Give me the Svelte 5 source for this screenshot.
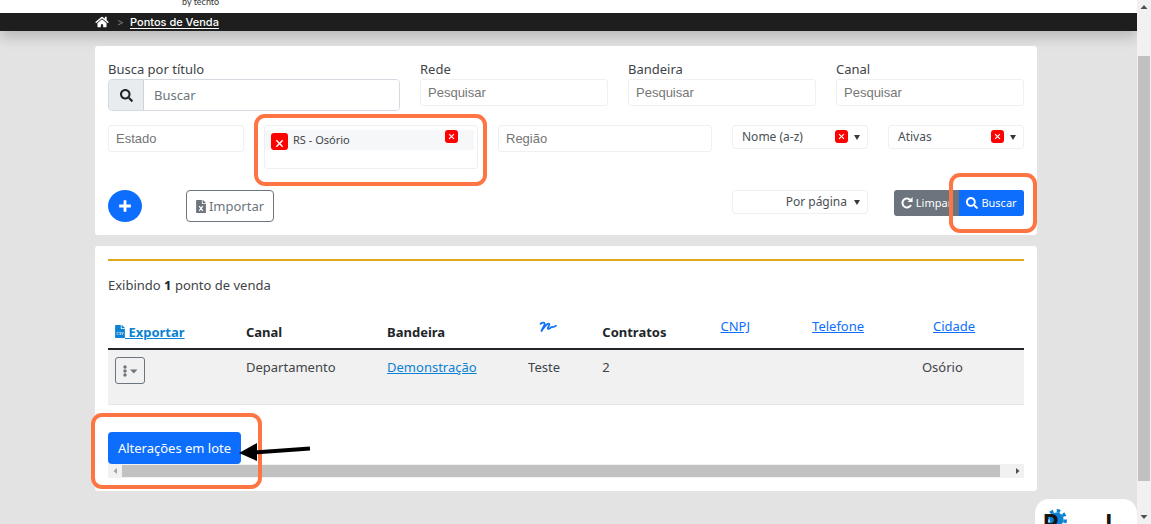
<script lang="ts">
    let search = $state('');
    let order = $state('Nome (a-z)');
    let status = $state('Ativas');
    let perPage = $state('Por página');

    const lookups = ['Rede', 'Bandeira', 'Canal'];
    const rows = [
        { canal: 'Departamento', bandeira: 'Demonstração', nome: 'Teste', contratos: 2, cnpj: '', telefone: '', cidade: 'Osório' }
    ];
</script>

{#snippet searchIcon()}
    <svg class="icon" viewBox="0 0 512 512" aria-hidden="true">
        <path d="M505 442.7L405.3 343c-4.5-4.5-10.6-7-17-7H372c27.6-35.3 44-79.7 44-128C416 93.1 322.9 0 208 0S0 93.1 0 208s93.1 208 208 208c48.3 0 92.7-16.4 128-44v16.3c0 6.4 2.5 12.5 7 17l99.7 99.7c9.4 9.4 24.6 9.4 33.9 0l28.3-28.3c9.4-9.4 9.4-24.6.1-34zM208 336c-70.7 0-128-57.2-128-128 0-70.7 57.2-128 128-128 70.7 0 128 57.2 128 128 0 70.7-57.2 128-128 128z" />
    </svg>
{/snippet}

{#snippet cross()}
    <svg class="cross" viewBox="0 0 8 8" aria-hidden="true">
        <path d="M1.2 1.2l5.6 5.6M6.8 1.2L1.2 6.8" />
    </svg>
{/snippet}

<div class="window">
    <div class="page">
        <header class="brand"><span>by techto</span></header>
        <nav class="breadcrumb">
            <a href="#inicio" aria-label="Início">
                <svg class="home" viewBox="0 0 576 512" aria-hidden="true">
                    <path d="M280.37 148.26L96 300.11V464a16 16 0 0 0 16 16l112.06-.29a16 16 0 0 0 15.92-16V368a16 16 0 0 1 16-16h64a16 16 0 0 1 16 16v95.64a16 16 0 0 0 16 16.05L464 480a16 16 0 0 0 16-16V300L295.67 148.26a12.19 12.19 0 0 0-15.3 0zM571.6 251.47L488 182.56V44.05a12 12 0 0 0-12-12h-56a12 12 0 0 0-12 12v72.61L318.47 43a48 48 0 0 0-61 0L4.34 251.47a12 12 0 0 0-1.6 16.9l25.5 31A12 12 0 0 0 45.15 301l235.22-193.74a12.19 12.19 0 0 1 15.3 0L530.9 301a12 12 0 0 0 16.9-1.6l25.5-31a12 12 0 0 0-1.7-16.93z" />
                </svg>
            </a>
            <span class="separator">&gt;</span>
            <a href="#pontos">Pontos de Venda</a>
        </nav>

        <main>
            <form class="panel filters" onsubmit={(e) => e.preventDefault()}>
                <div class="row lookups">
                    <div class="field">
                        <label for="titulo">Busca por título</label>
                        <div class="input-group">
                            <span class="addon">{@render searchIcon()}</span>
                            <input id="titulo" type="text" placeholder="Buscar" bind:value={search} />
                        </div>
                    </div>
                    {#each lookups as name}
                        <div class="field">
                            <label for={name}>{name}</label>
                            <input id={name} class="box" type="text" placeholder="Pesquisar" />
                        </div>
                    {/each}
                </div>

                <div class="row selects">
                    <input class="box" type="text" placeholder="Estado" aria-label="Estado" />
                    <div class="tokens">
                        <div class="token">
                            <button type="button" class="remove large" aria-label="Remover RS - Osório">{@render cross()}</button>
                            <span>RS - Osório</span>
                            <button type="button" class="remove" aria-label="Limpar cidades">{@render cross()}</button>
                        </div>
                        <input type="text" aria-label="Cidade" />
                        <i class="highlight around-city"></i>
                    </div>
                    <input class="box" type="text" placeholder="Região" aria-label="Região" />
                    <div class="select">
                        <select bind:value={order} aria-label="Ordenar">
                            <option>Nome (a-z)</option>
                            <option>Nome (z-a)</option>
                        </select>
                        <button type="button" class="remove" aria-label="Limpar ordem">{@render cross()}</button>
                    </div>
                    <div class="select">
                        <select bind:value={status} aria-label="Situação">
                            <option>Ativas</option>
                            <option>Inativas</option>
                        </select>
                        <button type="button" class="remove" aria-label="Limpar situação">{@render cross()}</button>
                    </div>
                </div>

                <div class="actions">
                    <button type="button" class="add" aria-label="Adicionar">
                        <svg viewBox="0 0 12 12" aria-hidden="true"><path d="M6 1v10M1 6h10" /></svg>
                    </button>
                    <button type="button" class="import">
                        <svg class="file" viewBox="0 0 384 512" aria-hidden="true">
                            <path d="M224 136V0H24C10.700 0 0 10.700 0 24v464c0 13.300 10.700 24 24 24h336c13.300 0 24-10.700 24-24V160H248c-13.200 0-24-10.800-24-24z" />
                            <path d="M384 121.900v6.100H256V0h6.100c6.400 0 12.500 2.500 17 7l97.900 98c4.500 4.500 7 10.600 7 16.900z" />
                            <path class="mark" d="M120 240l144 192M264 240L120 432" />
                        </svg>
                        Importar
                    </button>
                    <div class="select per-page">
                        <select bind:value={perPage} aria-label="Por página">
                            <option>Por página</option>
                            <option>50</option>
                        </select>
                    </div>
                    <div class="button-group">
                        <button type="reset" class="clear">
                            <svg class="icon" viewBox="0 0 16 16" aria-hidden="true">
                                <path class="arc" d="M13.300 10.700A6 6 0 1 1 12.200 3.700" />
                                <path d="M15.500 0v6.800H8.700z" />
                            </svg>
                            Limpar
                        </button>
                        <button type="submit" class="submit">
                            {@render searchIcon()}
                            Buscar
                            <i class="highlight around-search"></i>
                        </button>
                    </div>
                </div>
            </form>

            <section class="panel results">
                <hr />
                <p>Exibindo <strong>1</strong> ponto de venda</p>
                <table>
                    <colgroup>
                        <col class="w-export" />
                        <col class="w-canal" />
                        <col class="w-canal" />
                        <col class="w-name" />
                        <col class="w-contracts" />
                        <col class="w-cnpj" />
                        <col class="w-phone" />
                        <col />
                    </colgroup>
                    <thead>
                        <tr>
                            <th>
                                <a class="export" href="#exportar">
                                    <svg class="file" viewBox="0 0 384 512" aria-hidden="true">
                                        <path d="M224 136V0H24C10.700 0 0 10.700 0 24v464c0 13.300 10.700 24 24 24h336c13.300 0 24-10.700 24-24V160H248c-13.200 0-24-10.800-24-24z" />
                                        <path d="M384 121.900v6.100H256V0h6.100c6.400 0 12.500 2.500 17 7l97.900 98c4.500 4.500 7 10.600 7 16.900z" />
                                        <path class="csv" d="M135 285H95q-27 0-27 45t27 45h40M225 285h-45v40h45v48h-50M260 280l32 95 32-95" />
                                    </svg> Exportar</a>
                            </th>
                            <th>Canal</th>
                            <th>Bandeira</th>
                            <th>
                                <a class="sort" href="#nome" aria-label="Nome">
                                    <svg class="signature" viewBox="0 0 18 12" aria-hidden="true">
                                        <path d="M1.500 2.800C3 1.300 6 .9 5.600 3.200C5 5.500 3 8 2.200 10.500C4.500 6.500 8.500 2 10.200 2.800C11.500 3.800 7.500 7.500 9.200 8C10.800 8.300 12 5.500 13.200 5.800C13.800 6.200 13.500 7 17 4.800" />
                                    </svg>
                                </a>
                            </th>
                            <th>Contratos</th>
                            <th><a class="sort" href="#cnpj">CNPJ</a></th>
                            <th><a class="sort" href="#telefone">Telefone</a></th>
                            <th><a class="sort" href="#cidade">Cidade</a></th>
                        </tr>
                    </thead>
                    <tbody>
                        {#each rows as row}
                            <tr>
                                <td>
                                    <button type="button" class="menu" aria-label="Opções">
                                        <svg viewBox="0 0 16 12" aria-hidden="true">
                                            <circle cx="3" cy="2" r="1.700" />
                                            <circle cx="3" cy="6" r="1.700" />
                                            <circle cx="3" cy="10" r="1.700" />
                                            <path d="M8 4.500h7.500L11.750 8.500z" />
                                        </svg>
                                    </button>
                                </td>
                                <td>{row.canal}</td>
                                <td><a href="#bandeira">{row.bandeira}</a></td>
                                <td>{row.nome}</td>
                                <td>{row.contratos}</td>
                                <td>{row.cnpj}</td>
                                <td>{row.telefone}</td>
                                <td>{row.cidade}</td>
                            </tr>
                        {/each}
                    </tbody>
                </table>
                <button type="button" class="batch">
                    Alterações em lote
                    <i class="highlight around-batch"></i>
                    <svg class="arrow" viewBox="0 0 72 22" aria-hidden="true">
                        <path class="shaft" d="M14 11.500L71 7.500" />
                        <path d="M0 12L18 2V20z" />
                    </svg>
                </button>
                <div class="scroll-x">
                    <svg viewBox="0 0 14 14" aria-hidden="true"><path d="M9 4v6L5.500 7z" /></svg>
                    <div class="thumb"></div>
                    <svg class="dark" viewBox="0 0 14 14" aria-hidden="true"><path d="M6 4v6l3.500-3z" /></svg>
                </div>
            </section>
        </main>

        <aside class="widget">
            <svg class="gear" viewBox="0 0 24 24" aria-hidden="true">
                <circle class="teeth" cx="12" cy="12" r="10" />
                <circle cx="12" cy="12" r="8" />
            </svg>
            <span>R</span>
            <span>l</span>
        </aside>
    </div>

    <div class="scroll-y">
        <svg viewBox="0 0 14 14" aria-hidden="true"><path d="M3.500 9h7L7 5z" /></svg>
        <div class="track"><div class="thumb"></div></div>
        <svg viewBox="0 0 14 14" aria-hidden="true"><path d="M3.500 5h7L7 9z" /></svg>
    </div>
</div>

<style>
    :global(body) {
        background: #e3e3e3;
    }

    .window,
    .window * {
        box-sizing: border-box;
    }

    .window {
        display: flex;
        height: 100vh;
        overflow: hidden;
        font: 13px/20px "Noto Sans", "Open Sans", sans-serif;
        color: #404448;
    }

    .page {
        position: relative;
        flex: 1;
        min-width: 0;
        overflow: hidden;
    }

    button,
    input,
    select {
        margin: 0;
        font: inherit;
    }

    button {
        padding: 0;
        border: 0;
        cursor: pointer;
    }

    svg {
        fill: currentColor;
        flex: none;
    }

    .brand {
        position: relative;
        z-index: 1;
        height: 13px;
        padding-left: 182px;
        background: #fff;
        font: 9px/4px Lato, sans-serif;
        color: #333;
    }

    .brand span {
        display: block;
    }

    .breadcrumb {
        display: flex;
        align-items: center;
        gap: 8px;
        height: 18px;
        padding-left: 95px;
        background: #1e1e1e;
        box-shadow: 0 6px 14px rgba(0, 0, 0, 0.2);
        font: 500 11px/18px Inter, sans-serif;
    }

    .breadcrumb a {
        color: #fff;
        text-underline-offset: 2px;
    }

    .home {
        display: block;
        width: 14px;
        height: 12px;
    }

    .separator {
        width: 5px;
        font-size: 10px;
        color: #6c757d;
    }

    main {
        display: flex;
        flex-direction: column;
        gap: 11px;
        padding: 15px 100px 0 95px;
    }

    .panel {
        position: relative;
        padding: 13px;
        border-radius: 3px;
        background: #fff;
    }

    .filters {
        display: flex;
        flex-direction: column;
        height: 189px;
    }

    .row {
        display: grid;
        align-items: start;
        gap: 20px;
    }

    .lookups {
        grid-template-columns: 292fr 188fr 188fr 188fr;
        margin-bottom: 14px;
    }

    .selects {
        grid-template-columns: 136fr 214fr 214fr 136fr 136fr;
        margin-bottom: 21px;
    }

    .field {
        display: flex;
        flex-direction: column;
    }

    .field label {
        padding-top: 1px;
        line-height: 19px;
    }

    input {
        min-width: 0;
        width: 100%;
        outline: none;
    }

    .input-group {
        display: flex;
        height: 32px;
        border: 1px solid #d5dae0;
        border-radius: 4px;
        overflow: hidden;
    }

    .addon {
        display: flex;
        align-items: center;
        justify-content: center;
        width: 35px;
        flex: none;
        border-right: 1px solid #ced4da;
        background: #e9ecef;
        color: #212529;
    }

    .icon {
        width: 12px;
        height: 12px;
    }

    .addon .icon {
        width: 13px;
        height: 13px;
    }

    .input-group input {
        padding: 0 10px;
        border: 0;
    }

    .input-group input::placeholder {
        color: #6c757d;
    }

    .box {
        height: 27px;
        padding: 0 7px;
        border: 1px solid #f0f0f0;
        border-radius: 3px;
        font: 13px/20px "Liberation Sans", Arial, sans-serif;
    }

    .box::placeholder {
        color: #757575;
    }

    .tokens {
        position: relative;
        height: 44px;
        padding: 4px 3px 0 0;
        border: 1px solid #f0f0f0;
        border-radius: 3px;
    }

    .token {
        display: flex;
        gap: 5px;
        height: 20px;
        padding: 0 16px 0 6px;
        background: #f6f7f9;
        font-size: 11px;
    }

    .token span {
        flex: 1;
    }

    .tokens input {
        display: block;
        height: 16px;
        border: 0;
    }

    .remove {
        display: flex;
        align-items: center;
        justify-content: center;
        width: 13px;
        height: 13px;
        border-radius: 3px;
        background: #f00;
    }

    .remove.large {
        align-self: flex-end;
        width: 17px;
        height: 17px;
        padding-top: 3px;
    }

    .cross {
        width: 7px;
        height: 7px;
        fill: none;
        stroke: #fff;
        stroke-width: 1.3;
    }

    .large .cross {
        width: 9px;
        height: 9px;
    }

    .select {
        position: relative;
    }

    .select::after {
        content: "";
        position: absolute;
        top: 10px;
        right: 8px;
        border: 3px solid transparent;
        border-top: 5px solid #343a40;
        border-bottom: 0;
        pointer-events: none;
    }

    .select select {
        display: block;
        width: 100%;
        height: 24px;
        padding: 0 20px 0 9px;
        border: 1px solid #f0f0f0;
        border-radius: 3px;
        background: #fff;
        color: #495057;
        font-size: 12px;
        appearance: none;
    }

    .select .remove {
        position: absolute;
        top: 5px;
        right: 20px;
    }

    .actions {
        display: flex;
        align-items: flex-start;
    }

    .add {
        display: flex;
        align-items: center;
        justify-content: center;
        width: 34px;
        height: 32px;
        margin-right: 44px;
        border-radius: 50%;
        background: #0d6efd;
    }

    .add svg {
        width: 14px;
        height: 14px;
        stroke: #fff;
        stroke-width: 2.4;
    }

    .import {
        display: flex;
        align-items: center;
        justify-content: center;
        gap: 3px;
        width: 88px;
        height: 32px;
        border: 1px solid #6c757d;
        border-radius: 4px;
        background: #fff;
        color: #6c757d;
    }

    .file {
        width: 10px;
        height: 13px;
    }

    .mark {
        fill: none;
        stroke: #fff;
        stroke-width: 48;
    }

    .per-page {
        width: 136px;
        margin: 0 26px 0 auto;
    }

    .per-page select {
        text-align-last: right;
    }

    .button-group {
        display: flex;
    }

    .button-group button {
        position: relative;
        display: flex;
        align-items: center;
        justify-content: center;
        gap: 3px;
        width: 65px;
        height: 26px;
        color: #fff;
        font-size: 11px;
    }

    .button-group .clear {
        border-radius: 3px 0 0 3px;
        background: #6c757d;
    }

    .button-group .submit {
        border-radius: 0 3px 3px 0;
        background: #0d6efd;
    }

    .arc {
        fill: none;
        stroke: currentColor;
        stroke-width: 2.6;
    }

    .highlight {
        position: absolute;
        z-index: 1;
        border: 4px solid #ff7443;
        border-radius: 11px;
        pointer-events: none;
    }

    .around-city {
        inset: -12px -10px -18px -11px;
    }

    .around-search {
        inset: -17px -13px -17px -10px;
    }

    .around-batch {
        inset: -19px -21px -25px -17px;
    }

    hr {
        height: 2px;
        margin: 0 0 14px;
        border: 0;
        background: #e0a91b;
    }

    .results p {
        margin: 0 0 15px;
    }

    strong {
        color: #212529;
    }

    table {
        width: 100%;
        border-collapse: collapse;
        table-layout: fixed;
    }

    .w-export {
        width: 14.3%;
    }

    .w-canal {
        width: 15.4%;
    }

    .w-name {
        width: 8.1%;
    }

    .w-contracts {
        width: 11.7%;
    }

    .w-cnpj {
        width: 10%;
    }

    .w-phone {
        width: 13.2%;
    }

    th,
    td {
        padding: 6px 7px;
        text-align: left;
    }

    th {
        height: 39px;
        vertical-align: bottom;
        color: #212529;
        border-bottom: 2px solid #212529;
    }

    td {
        height: 55px;
        padding-top: 7px;
        vertical-align: top;
        background: #f1f1f1;
        border-bottom: 1px solid #e3e5e8;
    }

    td a,
    .export {
        color: #0b82d4;
    }

    .export .file {
        vertical-align: -1px;
    }

    .csv {
        fill: none;
        stroke: #fff;
        stroke-width: 24;
    }

    .sort {
        display: block;
        padding: 0 0 6px 11px;
        color: #0d6efd;
        font-weight: 400;
    }

    .signature {
        display: block;
        width: 18px;
        height: 12px;
        margin-bottom: 3px;
        fill: none;
        stroke: currentColor;
        stroke-width: 1.7;
        stroke-linecap: round;
    }

    .menu {
        display: flex;
        align-items: center;
        justify-content: center;
        width: 30px;
        height: 27px;
        border: 1px solid #6c757d;
        border-radius: 3px;
        background: transparent;
        color: #6c757d;
    }

    .menu svg {
        width: 16px;
        height: 12px;
    }

    .batch {
        position: relative;
        display: block;
        width: 133px;
        height: 32px;
        margin-top: 27px;
        border-radius: 4px;
        background: #0d6efd;
        color: #fff;
        white-space: nowrap;
    }

    .arrow {
        position: absolute;
        z-index: 2;
        top: 9px;
        left: 131px;
        width: 72px;
        height: 22px;
        fill: #000;
    }

    .shaft {
        stroke: #000;
        stroke-width: 4;
    }

    .scroll-x {
        display: flex;
        height: 14px;
        background: #f1f1f1;
        color: #a3a3a3;
    }

    .scroll-x svg {
        width: 14px;
        height: 14px;
    }

    .scroll-x .thumb {
        flex: 1;
        margin: 1px 10px 1px 0;
        background: #c1c1c1;
    }

    .scroll-x .dark {
        color: #505050;
    }

    .widget {
        position: absolute;
        right: 0;
        bottom: 0;
        display: flex;
        justify-content: space-between;
        width: 102px;
        height: 25px;
        padding: 11px 25px 0 8px;
        border-radius: 14px 14px 0 0;
        background: #fff;
        overflow: hidden;
        font: 700 24px/28px Inter, sans-serif;
        color: #151515;
    }

    .gear {
        position: absolute;
        top: 10px;
        left: 11px;
        width: 21px;
        height: 21px;
        fill: #0b82d4;
    }

    .teeth {
        fill: none;
        stroke: #0b82d4;
        stroke-width: 4;
        stroke-dasharray: 3.93 3.92;
    }

    .widget span {
        position: relative;
    }

    .scroll-y {
        display: flex;
        flex-direction: column;
        width: 14px;
        background: #f1f1f1;
        color: #505050;
    }

    .scroll-y svg {
        width: 14px;
        height: 14px;
    }

    .track {
        display: flex;
        flex: 1;
        flex-direction: column;
        justify-content: flex-end;
        padding: 0 1px 29px;
    }

    .track .thumb {
        height: 91%;
        background: #c1c1c1;
    }
</style>
